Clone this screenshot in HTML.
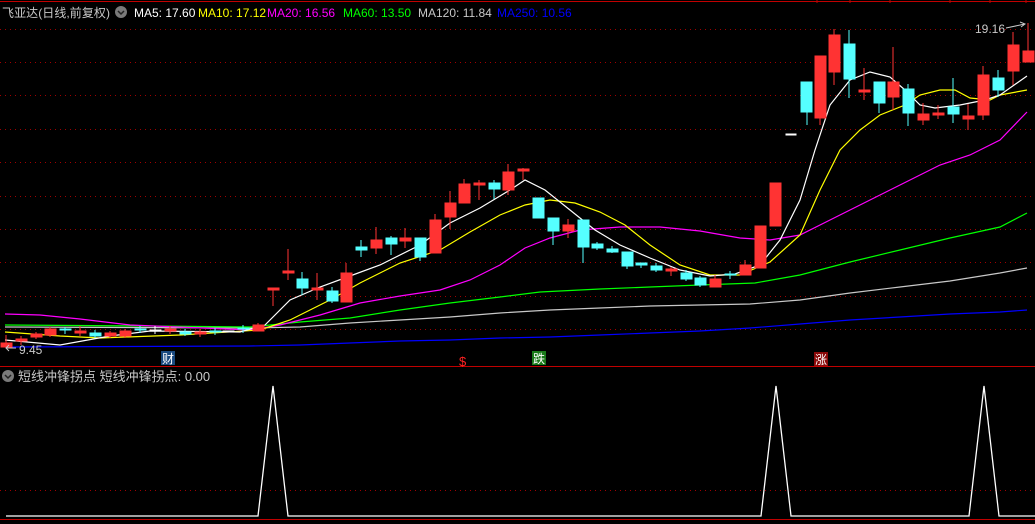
<!DOCTYPE html>
<html><head><meta charset="utf-8"><style>
html,body{margin:0;padding:0;background:#000;width:1035px;height:524px;overflow:hidden}
svg{display:block}
text{font-family:"Liberation Sans","Noto Sans CJK SC",sans-serif}
</style></head><body>
<svg width="1035" height="524" viewBox="0 0 1035 524" xmlns="http://www.w3.org/2000/svg">
<rect width="1035" height="524" fill="#000"/>
<line x1="0" y1="1.5" x2="1035" y2="1.5" stroke="#c00000" stroke-width="1"/>
<g stroke="#c00000" stroke-width="1">
<line x1="817" y1="0" x2="817" y2="3"/><line x1="850" y1="0" x2="850" y2="3"/><line x1="890" y1="0" x2="890" y2="3"/><line x1="950" y1="0" x2="950" y2="3"/><line x1="990" y1="0" x2="990" y2="3"/><line x1="1026" y1="0" x2="1026" y2="3"/>
</g>
<g stroke="#a00000" stroke-width="1" stroke-dasharray="1,4">
<line x1="0" y1="29.5" x2="1035" y2="29.5"/><line x1="0" y1="62.5" x2="1035" y2="62.5"/><line x1="0" y1="95.5" x2="1035" y2="95.5"/><line x1="0" y1="129.5" x2="1035" y2="129.5"/><line x1="0" y1="162.5" x2="1035" y2="162.5"/><line x1="0" y1="196.5" x2="1035" y2="196.5"/><line x1="0" y1="229.5" x2="1035" y2="229.5"/><line x1="0" y1="262.5" x2="1035" y2="262.5"/><line x1="0" y1="296.5" x2="1035" y2="296.5"/><line x1="0" y1="329.5" x2="1035" y2="329.5"/>
<line x1="0" y1="490.5" x2="1035" y2="490.5"/>
</g>
<line x1="0" y1="366.5" x2="1035" y2="366.5" stroke="#c00000"/>
<line x1="0" y1="519.5" x2="1035" y2="519.5" stroke="#c00000"/>
<g fill="none" stroke-width="1.2">
<polyline stroke="#0000ff" points="5,347 250,346 300,345 350,343 400,341 450,340 500,338 550,337 600,335 650,333 700,331 750,328 800,324 850,320 900,317 950,314 1000,312 1027,310"/>
<polyline stroke="#c8c8c8" points="5,327 250,328 300,327 350,323 400,320 450,317 500,313 550,310 600,308 650,306 700,305 750,304 800,300 850,293 900,287 950,281 1000,273 1027,268"/>
<polyline stroke="#00ff00" points="5,325 150,326 250,327 300,322 350,318 400,310 450,303 500,297 540,292 600,289 650,287 700,285 755,283 800,275 850,262 900,250 950,238 1000,227 1027,213"/>
<polyline stroke="#ff00ff" points="5,314 40,315 80,319 130,325 250,330 280,325 320,315 360,303 400,296 440,290 470,280 500,265 525,248 550,238 580,230 620,227 660,227 700,231 740,238 770,240 800,235 830,220 870,200 900,185 940,165 970,155 1000,140 1027,112"/>
<polyline stroke="#ffff00" points="5,332 60,336 100,338 180,335 260,330 290,320 330,300 360,283 400,263 440,250 470,232 500,215 525,205 550,200 575,203 600,212 625,225 650,245 680,265 710,275 740,275 770,262 800,235 820,190 840,150 860,130 880,115 905,105 920,95 940,90 955,90 970,98 990,100 1000,95 1027,90"/>
<polyline stroke="#ffffff" points="5,340 60,345 110,336 150,331 240,332 265,325 290,300 320,287 350,276 380,265 420,245 450,223 480,208 510,190 525,180 545,190 570,210 595,230 620,245 650,258 680,270 710,276 735,274 760,265 780,240 800,200 815,150 830,105 850,80 870,72 890,77 905,90 920,105 935,108 960,105 985,100 1000,95 1027,76"/>
</g>
<g>
<g stroke="#ff3333" fill="#ff3333">
<line x1="6" y1="335" x2="6" y2="347"/><rect x="1" y="343" width="11" height="4"/>
<line x1="21" y1="336" x2="21" y2="345"/><rect x="16" y="339" width="11" height="2"/>
<line x1="36" y1="332" x2="36" y2="339"/><rect x="31" y="334" width="11" height="3"/>
<line x1="50" y1="327" x2="50" y2="337"/><rect x="45" y="329" width="11" height="6"/>
<line x1="80" y1="326" x2="80" y2="336"/><rect x="75" y="331" width="11" height="2"/>
<line x1="110" y1="331" x2="110" y2="338"/><rect x="105" y="333" width="11" height="3"/>
<line x1="125" y1="329" x2="125" y2="338"/><rect x="120" y="331" width="11" height="5"/>
<line x1="170" y1="326" x2="170" y2="334"/><rect x="165" y="329" width="11" height="2"/>
<line x1="200" y1="329" x2="200" y2="337"/><rect x="195" y="332" width="11" height="2"/>
<line x1="258" y1="323" x2="258" y2="331"/><rect x="253" y="325" width="11" height="6"/>
<line x1="273" y1="288" x2="273" y2="306"/><rect x="268" y="288" width="11" height="2"/>
<line x1="288" y1="249" x2="288" y2="280"/><rect x="283" y="271" width="11" height="2"/>
<line x1="317" y1="273" x2="317" y2="300"/><rect x="312" y="288" width="11" height="2"/>
<line x1="346" y1="263" x2="346" y2="302"/><rect x="341" y="273" width="11" height="29"/>
<line x1="376" y1="227" x2="376" y2="254"/><rect x="371" y="240" width="11" height="8"/>
<line x1="405" y1="228" x2="405" y2="248"/><rect x="400" y="238" width="11" height="3"/>
<line x1="435" y1="214" x2="435" y2="253"/><rect x="430" y="220" width="11" height="33"/>
<line x1="450" y1="191" x2="450" y2="229"/><rect x="445" y="203" width="11" height="14"/>
<line x1="464" y1="179" x2="464" y2="203"/><rect x="459" y="184" width="11" height="19"/>
<line x1="479" y1="180" x2="479" y2="200"/><rect x="474" y="183" width="11" height="2"/>
<line x1="508" y1="164" x2="508" y2="195"/><rect x="503" y="172" width="11" height="18"/>
<line x1="523" y1="168" x2="523" y2="180"/><rect x="518" y="169" width="11" height="2"/>
<line x1="568" y1="219" x2="568" y2="238"/><rect x="563" y="225" width="11" height="6"/>
<line x1="671" y1="267" x2="671" y2="276"/><rect x="666" y="269" width="11" height="2"/>
<line x1="715" y1="275" x2="715" y2="287"/><rect x="710" y="279" width="11" height="8"/>
<line x1="745" y1="260" x2="745" y2="275"/><rect x="740" y="265" width="11" height="10"/>
<line x1="760" y1="226" x2="760" y2="268"/><rect x="755" y="226" width="11" height="42"/>
<line x1="775" y1="183" x2="775" y2="226"/><rect x="770" y="183" width="11" height="43"/>
<line x1="820" y1="56" x2="820" y2="125"/><rect x="815" y="56" width="11" height="62"/>
<line x1="834" y1="29" x2="834" y2="85"/><rect x="829" y="35" width="11" height="37"/>
<line x1="864" y1="68" x2="864" y2="100"/><rect x="859" y="90" width="11" height="2"/>
<line x1="893" y1="47" x2="893" y2="110"/><rect x="888" y="82" width="11" height="15"/>
<line x1="923" y1="103" x2="923" y2="125"/><rect x="918" y="114" width="11" height="6"/>
<line x1="938" y1="105" x2="938" y2="119"/><rect x="933" y="113" width="11" height="2"/>
<line x1="968" y1="104" x2="968" y2="130"/><rect x="963" y="116" width="11" height="3"/>
<line x1="983" y1="66" x2="983" y2="120"/><rect x="978" y="75" width="11" height="40"/>
<line x1="1013" y1="32" x2="1013" y2="85"/><rect x="1008" y="45" width="11" height="26"/>
<line x1="1028" y1="23" x2="1028" y2="62"/><rect x="1023" y="51" width="11" height="11"/>
</g>
<g stroke="#55ffff" fill="#55ffff">
<line x1="65" y1="327" x2="65" y2="334"/><rect x="60" y="329" width="11" height="1"/>
<line x1="95" y1="330" x2="95" y2="338"/><rect x="90" y="333" width="11" height="3"/>
<line x1="140" y1="326" x2="140" y2="333"/><rect x="135" y="329" width="11" height="1"/>
<line x1="185" y1="329" x2="185" y2="336"/><rect x="180" y="332" width="11" height="2"/>
<line x1="215" y1="328" x2="215" y2="335"/><rect x="210" y="331" width="11" height="1"/>
<line x1="243" y1="325" x2="243" y2="333"/><rect x="238" y="328" width="11" height="1"/>
<line x1="302" y1="272" x2="302" y2="295"/><rect x="297" y="279" width="11" height="9"/>
<line x1="332" y1="287" x2="332" y2="303"/><rect x="327" y="291" width="11" height="10"/>
<line x1="361" y1="240" x2="361" y2="257"/><rect x="356" y="247" width="11" height="3"/>
<line x1="391" y1="236" x2="391" y2="255"/><rect x="386" y="238" width="11" height="6"/>
<line x1="420" y1="238" x2="420" y2="261"/><rect x="415" y="238" width="11" height="19"/>
<line x1="494" y1="180" x2="494" y2="199"/><rect x="489" y="183" width="11" height="6"/>
<line x1="538" y1="198" x2="538" y2="218"/><rect x="533" y="198" width="11" height="20"/>
<line x1="553" y1="218" x2="553" y2="245"/><rect x="548" y="218" width="11" height="13"/>
<line x1="583" y1="220" x2="583" y2="263"/><rect x="578" y="220" width="11" height="27"/>
<line x1="597" y1="242" x2="597" y2="250"/><rect x="592" y="244" width="11" height="4"/>
<line x1="612" y1="246" x2="612" y2="253"/><rect x="607" y="249" width="11" height="3"/>
<line x1="627" y1="252" x2="627" y2="269"/><rect x="622" y="252" width="11" height="14"/>
<line x1="641" y1="263" x2="641" y2="268"/><rect x="636" y="263" width="11" height="2"/>
<line x1="656" y1="263" x2="656" y2="272"/><rect x="651" y="266" width="11" height="4"/>
<line x1="686" y1="270" x2="686" y2="281"/><rect x="681" y="273" width="11" height="6"/>
<line x1="700" y1="276" x2="700" y2="287"/><rect x="695" y="278" width="11" height="7"/>
<line x1="730" y1="271" x2="730" y2="279"/><rect x="725" y="274" width="11" height="1"/>
<line x1="807" y1="82" x2="807" y2="125"/><rect x="801" y="82" width="11" height="30"/>
<line x1="849" y1="30" x2="849" y2="98"/><rect x="844" y="44" width="11" height="35"/>
<line x1="879" y1="82" x2="879" y2="113"/><rect x="874" y="82" width="11" height="21"/>
<line x1="908" y1="84" x2="908" y2="126"/><rect x="903" y="89" width="11" height="24"/>
<line x1="953" y1="78" x2="953" y2="123"/><rect x="948" y="107" width="11" height="7"/>
<line x1="998" y1="70" x2="998" y2="97"/><rect x="993" y="78" width="11" height="12"/>
</g>
<g stroke="#fff" fill="#fff">
<line x1="155" y1="326" x2="155" y2="334"/><rect x="150" y="330" width="11" height="1"/>
<rect x="223" y="331" width="11" height="1"/>
<rect x="786" y="134" width="10" height="1"/>
</g>
</g>
<text x="2" y="17" font-size="12" fill="#c8c8c8" textLength="108">飞亚达(日线,前复权)</text>
<circle cx="121" cy="12" r="6" fill="#7a7a7a"/><path d="M118 11 L121 14 L124 11" stroke="#222" stroke-width="1.5" fill="none"/>
<text x="134" y="17" font-size="12" fill="#ffffff">MA5: 17.60</text>
<text x="198" y="17" font-size="12" fill="#ffff00">MA10: 17.12</text>
<text x="267" y="17" font-size="12" fill="#ff00ff">MA20: 16.56</text>
<text x="343" y="17" font-size="12" fill="#00ff00">MA60: 13.50</text>
<text x="418" y="17" font-size="12" fill="#c8c8c8">MA120: 11.84</text>
<text x="497" y="17" font-size="12" fill="#0000ff">MA250: 10.56</text>
<text x="975" y="33" font-size="12" fill="#c8c8c8">19.16</text>
<path d="M1006 28 L1025 24 M1020 22 L1025 24 L1021 27" stroke="#c8c8c8" fill="none"/>
<text x="19" y="354" font-size="12" fill="#c8c8c8">9.45</text>
<path d="M16 348 L6 348 M9 345 L6 348 L9 351" stroke="#c8c8c8" fill="none"/>
<rect x="161" y="351" width="14" height="14" fill="#1a4a80"/><text x="162" y="363" font-size="12" fill="#fff">财</text>
<text x="459" y="366" font-size="13" fill="#ff2222">$</text>
<rect x="532" y="351" width="14" height="14" fill="#1a7a1a"/><text x="533" y="363" font-size="12" fill="#fff">跌</text>
<rect x="814" y="352" width="14" height="14" fill="#8a0a0a"/><text x="815" y="364" font-size="12" fill="#fff">涨</text>
<circle cx="8" cy="376" r="6" fill="#7a7a7a"/><path d="M5 375 L8 378 L11 375" stroke="#222" stroke-width="1.5" fill="none"/>
<text x="18" y="381" font-size="13" fill="#c8c8c8">短线冲锋拐点  短线冲锋拐点: 0.00</text>
<polyline fill="none" stroke="#fff" stroke-width="1.3" points="6,516 258,516 273,386 288,516 761,516 776,386 791,516 969,516 984,386 999,516 1035,516"/>
</svg>
</body></html>
